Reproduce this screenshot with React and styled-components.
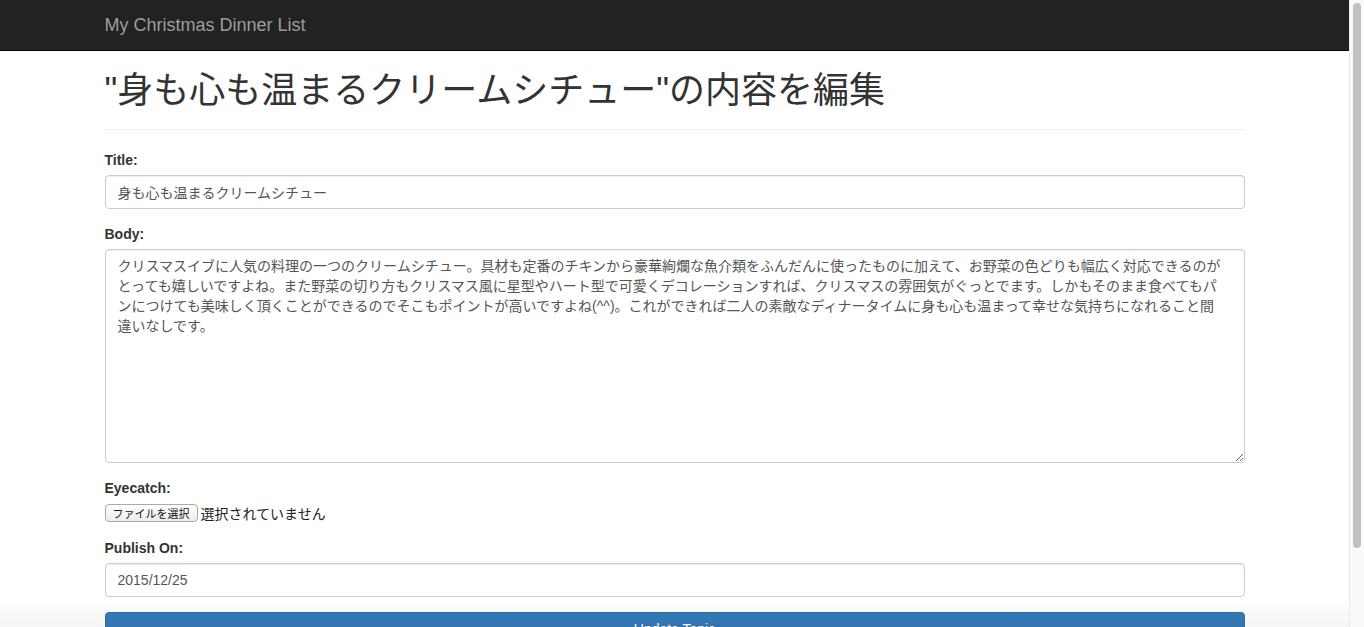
import React from "react";
import styled, { createGlobalStyle } from "styled-components";

const GlobalStyle = createGlobalStyle`
  html, body {
    margin: 0;
    padding: 0;
    height: 100%;
    overflow: hidden;
    background: #fff;
  }
  body {
    font-family: "Liberation Sans", Arial, "Noto Sans CJK JP", sans-serif;
    font-size: 14px;
    line-height: 20px;
    color: #333;
  }
  * {
    box-sizing: border-box;
  }
`;

const BODY_TEXT =
  "クリスマスイブに人気の料理の一つのクリームシチュー。具材も定番のチキンから豪華絢爛な魚介類をふんだんに使ったものに加えて、お野菜の色どりも幅広く対応できるのがとっても嬉しいですよね。また野菜の切り方もクリスマス風に星型やハート型で可愛くデコレーションすれば、クリスマスの雰囲気がぐっとでます。しかもそのまま食べてもパンにつけても美味しく頂くことができるのでそこもポイントが高いですよね(^^)。これができれば二人の素敵なディナータイムに身も心も温まって幸せな気持ちになれること間違いなしです。";

const Viewport = styled.div`
  display: flex;
  height: 100vh;
  width: 100%;
`;

const Page = styled.div`
  flex: 1;
  min-width: 0;
  overflow: hidden;
  position: relative;
`;

const Navbar = styled.nav`
  height: 51px;
  background: #222;
  border-bottom: 1px solid #080808;
`;

const Container = styled.div`
  width: 1170px;
  margin: 0 auto;
  padding: 0 15px;
`;

const Brand = styled.a`
  display: block;
  padding: 15px 0;
  font-size: 18px;
  line-height: 20px;
  color: #9d9d9d;
  text-decoration: none;
`;

const PageHeader = styled.div`
  margin: 20px 0 20px;
  padding-bottom: 18px;
  border-bottom: 1px solid #eee;
`;

const Heading = styled.h1`
  margin: 0;
  font-size: 36px;
  line-height: 40px;
  font-weight: 400;
  color: #333;
`;

const FormGroup = styled.div`
  margin-bottom: ${({ $gap }) => $gap || 15}px;
`;

const Label = styled.label`
  display: inline-block;
  margin-bottom: 5px;
  font-weight: bold;
  font-size: 14px;
  line-height: 20px;
`;

const fieldStyles = `
  display: block;
  width: 100%;
  padding: 6px 12px;
  font-family: inherit;
  font-size: 14px;
  line-height: 20px;
  color: #555;
  background: #fff;
  border: 1px solid #ccc;
  border-radius: 4px;
  box-shadow: inset 0 1px 1px rgba(0, 0, 0, 0.075);
  outline: none;
`;

const Input = styled.input`
  ${fieldStyles}
  height: 34px;
`;

const TextArea = styled.textarea`
  ${fieldStyles}
  height: 214px;
  padding-right: 18px;
  resize: vertical;
`;

const FileRow = styled.div`
  display: flex;
  align-items: center;
  gap: 3px;
  height: 19px;
`;

const FileButton = styled.span`
  display: inline-flex;
  align-items: center;
  height: 18px;
  padding: 0 7px;
  font-family: "Noto Sans CJK JP", sans-serif;
  font-size: 11px;
  color: #111;
  border: 1px solid #aaa;
  border-radius: 4px;
  background: linear-gradient(#fff, #ededed);
`;

const FileStatus = styled.span`
  font-family: "Noto Sans CJK JP", sans-serif;
  font-size: 14px;
  line-height: 18px;
  color: #222;
`;

const SubmitButton = styled.button`
  display: block;
  width: 100%;
  padding: 6px 12px;
  font-family: inherit;
  font-size: 14px;
  line-height: 20px;
  color: #fff;
  background: #337ab7;
  border: 1px solid #2e6da4;
  border-radius: 4px;
`;

const BottomShade = styled.div`
  position: absolute;
  left: 0;
  right: 0;
  bottom: 0;
  height: 32px;
  pointer-events: none;
  background: linear-gradient(rgba(0, 0, 0, 0), rgba(0, 0, 0, 0.035));
`;

const ScrollTrack = styled.div`
  width: 15px;
  flex: none;
  padding: 3px 3px 0 3px;
  background: #fafafa;
  border-left: 1px solid #e8e8e8;
`;

const ScrollThumb = styled.div`
  width: 8px;
  height: 545px;
  border-radius: 4px;
  background: #c1c1c1;
`;

export default function App() {
  return (
    <>
      <GlobalStyle />
      <Viewport>
        <Page>
          <Navbar>
            <Container>
              <Brand href="#">My Christmas Dinner List</Brand>
            </Container>
          </Navbar>
          <Container>
            <PageHeader>
              <Heading>"身も心も温まるクリームシチュー"の内容を編集</Heading>
            </PageHeader>
            <form onSubmit={(e) => e.preventDefault()}>
              <FormGroup>
                <Label>Title:</Label>
                <Input type="text" defaultValue="身も心も温まるクリームシチュー" />
              </FormGroup>
              <FormGroup>
                <Label>Body:</Label>
                <TextArea rows={10} defaultValue={BODY_TEXT} />
              </FormGroup>
              <FormGroup $gap={16}>
                <Label>Eyecatch:</Label>
                <FileRow>
                  <FileButton>ファイルを選択</FileButton>
                  <FileStatus>選択されていません</FileStatus>
                </FileRow>
              </FormGroup>
              <FormGroup>
                <Label>Publish On:</Label>
                <Input type="text" defaultValue="2015/12/25" />
              </FormGroup>
              <SubmitButton type="submit">Update Topic</SubmitButton>
            </form>
          </Container>
          <BottomShade />
        </Page>
        <ScrollTrack>
          <ScrollThumb />
        </ScrollTrack>
      </Viewport>
    </>
  );
}
